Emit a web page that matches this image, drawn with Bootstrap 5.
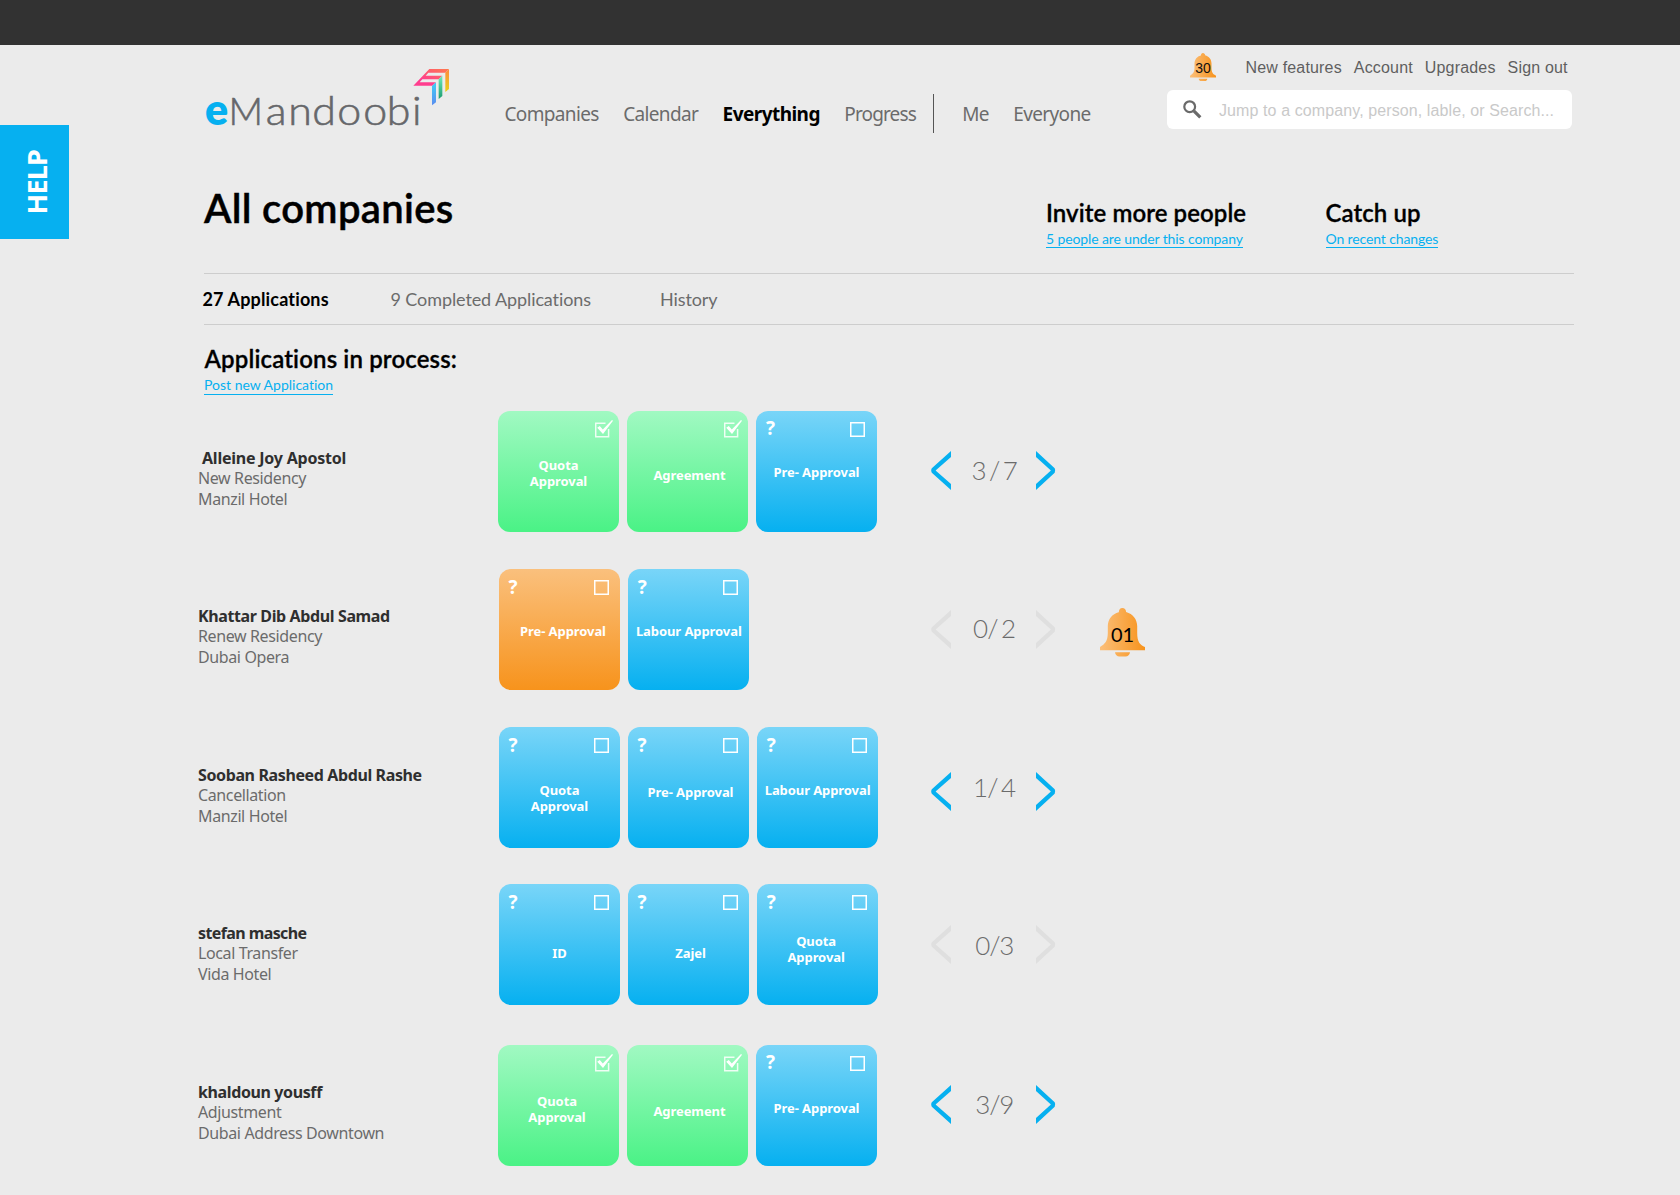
<!DOCTYPE html>
<html lang="en">
<head>
<meta charset="utf-8">
<meta name="viewport" content="width=device-width, initial-scale=1">
<title>eMandoobi</title>
<link href="https://cdn.jsdelivr.net/npm/bootstrap@5.3.0/dist/css/bootstrap.min.css" rel="stylesheet">
<style>
:root{--sky:#06b0f0;--ink:#6b6b6b}
body{background:#ebebeb;color:var(--ink);font-family:"Noto Sans","Open Sans",sans-serif;overflow:hidden;height:1195px}
a{color:inherit;text-decoration:none}
.topbar{height:45px;background:#323232}
.help-tab{position:absolute;left:0;top:125px;width:69px;height:114px;background:var(--sky);color:#fff}
.help-tab span{writing-mode:vertical-rl;transform:rotate(180deg);font:700 27px/30px "Noto Sans",sans-serif;letter-spacing:-.8px;margin:1px 0 0 5px}
.page{width:1370px;margin-left:204px}
.lato{font-family:Lato,sans-serif;font-variant-ligatures:none}

.site-head{height:137px}
.logo{width:256px;height:74px;margin:15px 0 0 -4px}
.logo text{font-family:Lato,sans-serif}
.main-nav{margin:56px 0 0 48.5px;font-size:19px;line-height:26px;gap:24.4px;letter-spacing:-.65px}
.main-nav .active{color:#000;font-weight:700;letter-spacing:-.55px}
.main-nav .tight{letter-spacing:-.85px}
.main-nav .rule{width:1px;height:39px;background:#555;margin:-7px 4px 0 -7.500px}
.tools{width:405px;margin:8px 2px 0 auto;font-family:"Liberation Sans",Arial,sans-serif}
.tool-links{height:37px;padding-left:23px;gap:12px;font-size:16px;line-height:20px;letter-spacing:.17px;color:#5f5f5f}
.tool-links a{margin-top:5px}
.tool-links svg{margin-right:17.5px}
.search{height:39px;border-radius:6px;background:#fff;padding-left:16px}
.search input{background:none;padding:2px 0 0 17px;font-size:16px;letter-spacing:.1px;height:39px}
.search input:focus{background:none;box-shadow:none}
.search input::placeholder{color:#c9c9c9;opacity:1}

.title-row{height:92px;border-bottom:1px solid #cdcdcd}
.title-row h1{font-size:40px;line-height:48px;font-weight:600;letter-spacing:.32px;color:#000;-webkit-text-stroke:.45px #000;margin:1.500px 0 0}
h2{font-size:24px;line-height:27px;padding-top:1px;font-weight:600;letter-spacing:.08px;color:#000;-webkit-text-stroke:.3px #000}
.col-invite{width:280px;margin:16px -1px 0 auto}
.col-catch{width:249px;margin-top:16px;padding-left:.5px}
.sub{display:inline-block;font-size:14px;line-height:17px;color:var(--sky);border-bottom:1px solid var(--sky)}
.sub-tight{letter-spacing:-.12px}
.tabs-row{height:51px;border-bottom:1px solid #cdcdcd;padding-top:14px;font-size:18px;line-height:22px;letter-spacing:-.1px}
.tabs-row a:nth-child(1){width:188px;margin-left:-1.5px;color:#000;font-weight:700;letter-spacing:.15px}
.tabs-row a:nth-child(2){width:269.500px}
.section-head{padding-top:19px;height:86px}
.section-head h2{letter-spacing:.14px;padding-left:.5px}
.section-head .sub{line-height:18px}

.app-row{height:121px;margin-left:-6px;margin-bottom:37px}
.app-row.r4{margin-top:-1px;margin-bottom:40px}
.who{width:300px;padding-top:37px;font-size:16px;line-height:20.4px;letter-spacing:-.38px}
.shifted .who{width:301px}
.r3 .who{padding-top:38px}.r4 .who{padding-top:39px}
.who b{color:#2f2f2f}
.r1 .who b{letter-spacing:-.22px}
.r4 .who b{letter-spacing:-.6px}
.steps{width:379px;gap:8px}
.shifted .steps{margin-right:-1px;gap:8.300px}
.step{width:121px;height:121px;border-radius:12px;color:#fff;font-weight:700;font-size:13px;line-height:16px;letter-spacing:-.08px;text-align:center;background:linear-gradient(#79d5f8,#06b0f0)}
.step.done{background:linear-gradient(#a1f9c2,#4af286)}
.step.due{background:linear-gradient(#fac07d,#f7931c)}
.step-top{height:26px;padding:11px 11px 0 9.500px}
.r1 .step-top,.r5 .step-top{padding-right:12px}
.r1 .step-top,.r5 .step-top{padding-left:10px}
.r1 .step-top i,.r5 .step-top i{margin-top:-1px}
.app-row .done .step-top{padding:9px 6.500px 0 0}
.step-top i{font:700 19px/15px "Open Sans",sans-serif}
.box{width:15px;height:15px;box-shadow:inset 0 0 0 1.5px #fff}
.t46{margin-top:20px}.t48{margin-top:22px}.t49{margin-top:23px}.t53{margin-top:27px}.t54{margin-top:28px}.t55{margin-top:29px}.t56{margin-top:30px}.t57{margin-top:31px}.t58{margin-top:32px}.t61{margin-top:35px}
.nr{padding-left:7px}.nr1{padding-left:4px}.nl{padding-right:3px}
.pager{margin-left:54px}
.pager svg{width:20px;height:39px;margin-top:40px;fill:var(--sky)}
.r2 .pager svg{margin-top:41px}.r3 .pager svg{margin-top:45px}.r4 .pager svg{margin-top:41px}
.pager.off svg{fill:#dfdfdf}
.pager span{width:85px;padding-left:1.500px;text-align:center;margin-top:44px;font-size:26px;line-height:31px;font-weight:300;letter-spacing:-.8px;word-spacing:-3px;white-space:nowrap}
.r3 .pager span{margin-top:45px}
.r4 .pager span{margin-top:46px}
.r4 .pager span,.r5 .pager span{letter-spacing:-1.200px}
.bell-lg{margin:39px 0 0 44px}
</style>
</head>
<body>
<svg width="0" height="0" class="position-absolute" aria-hidden="true">
  <defs>
    <linearGradient id="amber"><stop offset="0" stop-color="#fbbf7a"/><stop offset="1" stop-color="#f7931c"/></linearGradient>
    <symbol id="bell" viewBox="0 0 45 49"><path fill="url(#amber)" d="M22.3 0c2.2 0 3.7 1.6 3.8 3.9C33 6 37 11 37.2 18v7c0 9 2.800 12 7.800 14v3.300H0V39c5-3 7.700-6 7.800-14v-7C8 11 12 6 18.800 4.200 18.900 1.600 20.300 0 22.300 0zM15 44.300h15c-.3 2.500-2 4.200-4.500 4.200h-6c-2.500 0-4.200-1.700-4.500-4.200z"/></symbol>
    <symbol id="prev" viewBox="0 0 20 39"><path d="M20 0 .8 17.300Q-.4 19.500.8 21.700L20 39V33L4.600 19.500 20 6z"/></symbol>
    <symbol id="next" viewBox="0 0 20 39"><path d="M0 0 18.700 17.300q1.200 2.200 0 4.400L0 39V33L14.900 19.500 0 6z"/></symbol>
    <symbol id="tick" viewBox="0 -2.500 18 18"><path fill="none" stroke="#fff" stroke-opacity=".85" stroke-width="1.500" d="M10.500.7H.7v13.600h12.900V6.500"/><path fill="#fff" d="M2.200 5.200 4.800 3.600l3 3.300L17-2.500l1 .7L8 11.400z"/></symbol>
  </defs>
</svg>

<div class="topbar"></div>
<a href="#" class="help-tab d-flex align-items-center justify-content-center"><span>HELP</span></a>

<div class="page">
  <header class="site-head d-flex align-items-start">
    <svg class="logo flex-shrink-0" viewBox="200 60 256 74" role="img" aria-label="eMandoobi">
      <defs>
        <linearGradient id="pink" x1="0" y1="1" x2="1" y2="0"><stop offset=".3" stop-color="#ff3d8e"/><stop offset="1" stop-color="#ff7a4d"/></linearGradient>
        <linearGradient id="gold" x1="0" y1="0" x2="0" y2="1"><stop offset="0" stop-color="#ff8a3c"/><stop offset="1" stop-color="#e8d21a"/></linearGradient>
        <linearGradient id="teal" x1="0" y1="0" x2="0" y2="1"><stop offset="0" stop-color="#6eedb8"/><stop offset="1" stop-color="#1b9c70"/></linearGradient>
        <linearGradient id="blue" x1="0" y1="0" x2="0" y2="1"><stop offset="0" stop-color="#3fd0f5"/><stop offset="1" stop-color="#5a8cf0"/></linearGradient>
      </defs>
      <text x="205" y="125" font-size="43" font-weight="800" fill="#06b0f0">e</text>
      <g font-weight="300" fill="#66676a" stroke="#66676a" stroke-width=".6">
        <text x="228.500" y="125" font-size="38">M</text>
        <text transform="scale(1.1 1)" x="241.500 262 283.800 306.700 330.200 351.500 374.500" y="125" font-size="39">andoobi</text>
      </g>
      <g transform="translate(190 50) scale(.33333)">
        <path fill="url(#pink)" d="M718 57H777L766 68H715L707 77H757L746 88H697L689 97H738L727 107H670z"/>
        <path fill="url(#gold)" d="M777 57V117L766 126V68z"/>
        <path fill="url(#teal)" d="M757 77V138L746 147V88z"/>
        <path fill="url(#blue)" d="M738 97V157L726 166V108z"/>
      </g>
    </svg>
    <nav class="main-nav d-flex">
      <a href="#">Companies</a><a href="#">Calendar</a><a href="#" class="active">Everything</a><a href="#" class="tight">Progress</a>
      <span class="rule"></span>
      <a href="#">Me</a><a href="#">Everyone</a>
    </nav>
    <div class="tools">
      <div class="tool-links d-flex align-items-start">
        <svg width="26" height="28.500" viewBox="0 0 26 28.500"><use href="#bell" width="26" height="28.500"/><text x="12.900" y="19.800" font-size="14" letter-spacing="-.2" text-anchor="middle" fill="#111">30</text></svg>
        <a href="#">New features</a><a href="#">Account</a><a href="#">Upgrades</a><a href="#">Sign out</a>
      </div>
      <div class="search d-flex align-items-center">
        <svg class="flex-shrink-0" width="19" height="19" viewBox="0 0 19 19" fill="none" stroke="#6a6a6a"><circle cx="6.700" cy="6.700" r="5.400" stroke-width="2.200"/><path d="M10.800 10.800 17.300 17.300" stroke-width="3.200"/></svg>
        <input type="text" class="form-control border-0" placeholder="Jump to a company, person, lable, or Search...">
      </div>
    </div>
  </header>

  <div class="title-row d-flex align-items-start lato">
    <h1>All companies</h1>
    <div class="col-invite"><h2 class="mb-0">Invite more people</h2><a href="#" class="sub sub-tight">5 people are under this company</a></div>
    <div class="col-catch"><h2 class="mb-0">Catch up</h2><a href="#" class="sub sub-tight">On recent changes</a></div>
  </div>
  <nav class="tabs-row d-flex lato"><a href="#">27 Applications</a><a href="#">9 Completed Applications</a><a href="#">History</a></nav>
  <div class="section-head lato"><h2 class="mb-0">Applications in process:</h2><a href="#" class="sub">Post new Application</a></div>

  <section class="app-row r1 d-flex align-items-start">
    <div class="who"><b class="ps-1">Alleine Joy Apostol</b><br>New Residency<br>Manzil Hotel</div>
    <div class="steps d-flex">
      <div class="step done"><div class="step-top d-flex justify-content-end"><svg width="18" height="18"><use href="#tick"/></svg></div><div class="t46">Quota<br>Approval</div></div>
      <div class="step done"><div class="step-top d-flex justify-content-end"><svg width="18" height="18"><use href="#tick"/></svg></div><div class="t56 nr1">Agreement</div></div>
      <div class="step"><div class="step-top d-flex justify-content-between"><i>?</i><span class="box"></span></div><div class="t53">Pre- Approval</div></div>
    </div>
    <div class="pager d-flex lato"><svg><use href="#prev"/></svg><span>3 / 7</span><svg><use href="#next"/></svg></div>
  </section>

  <section class="app-row r2 shifted d-flex align-items-start">
    <div class="who"><b>Khattar Dib Abdul Samad</b><br>Renew Residency<br>Dubai Opera</div>
    <div class="steps d-flex">
      <div class="step due"><div class="step-top d-flex justify-content-between"><i>?</i><span class="box"></span></div><div class="t54 nr">Pre- Approval</div></div>
      <div class="step"><div class="step-top d-flex justify-content-between"><i>?</i><span class="box"></span></div><div class="t54">Labour Approval</div></div>
    </div>
    <div class="pager off d-flex lato"><svg><use href="#prev"/></svg><span>0/ 2</span><svg><use href="#next"/></svg></div>
    <svg class="bell-lg lato" width="45" height="49"><use href="#bell" width="45" height="49"/><text x="22.500" y="34" font-size="20" text-anchor="middle" fill="#000">01</text></svg>
  </section>

  <section class="app-row r3 shifted d-flex align-items-start">
    <div class="who"><b>Sooban Rasheed Abdul Rashe</b><br>Cancellation<br>Manzil Hotel</div>
    <div class="steps d-flex">
      <div class="step"><div class="step-top d-flex justify-content-between"><i>?</i><span class="box"></span></div><div class="t55">Quota<br>Approval</div></div>
      <div class="step"><div class="step-top d-flex justify-content-between"><i>?</i><span class="box"></span></div><div class="t57 nr1">Pre- Approval</div></div>
      <div class="step"><div class="step-top d-flex justify-content-between"><i>?</i><span class="box"></span></div><div class="t55">Labour Approval</div></div>
    </div>
    <div class="pager d-flex lato"><svg><use href="#prev"/></svg><span>1/ 4</span><svg><use href="#next"/></svg></div>
  </section>

  <section class="app-row r4 shifted d-flex align-items-start">
    <div class="who"><b>stefan masche</b><br>Local Transfer<br>Vida Hotel</div>
    <div class="steps d-flex">
      <div class="step"><div class="step-top d-flex justify-content-between"><i>?</i><span class="box"></span></div><div class="t61">ID</div></div>
      <div class="step"><div class="step-top d-flex justify-content-between"><i>?</i><span class="box"></span></div><div class="t61 nr1">Zajel</div></div>
      <div class="step"><div class="step-top d-flex justify-content-between"><i>?</i><span class="box"></span></div><div class="t49 nl">Quota<br>Approval</div></div>
    </div>
    <div class="pager off d-flex lato"><svg><use href="#prev"/></svg><span>0/3</span><svg><use href="#next"/></svg></div>
  </section>

  <section class="app-row r5 d-flex align-items-start">
    <div class="who"><b>khaldoun yousff</b><br>Adjustment<br>Dubai Address Downtown</div>
    <div class="steps d-flex">
      <div class="step done"><div class="step-top d-flex justify-content-end"><svg width="18" height="18"><use href="#tick"/></svg></div><div class="t48 nl">Quota<br>Approval</div></div>
      <div class="step done"><div class="step-top d-flex justify-content-end"><svg width="18" height="18"><use href="#tick"/></svg></div><div class="t58 nr1">Agreement</div></div>
      <div class="step"><div class="step-top d-flex justify-content-between"><i>?</i><span class="box"></span></div><div class="t55">Pre- Approval</div></div>
    </div>
    <div class="pager d-flex lato"><svg><use href="#prev"/></svg><span>3/9</span><svg><use href="#next"/></svg></div>
  </section>
</div>
<script src="https://cdn.jsdelivr.net/npm/bootstrap@5.3.0/dist/js/bootstrap.bundle.min.js"></script>
</body>
</html>
